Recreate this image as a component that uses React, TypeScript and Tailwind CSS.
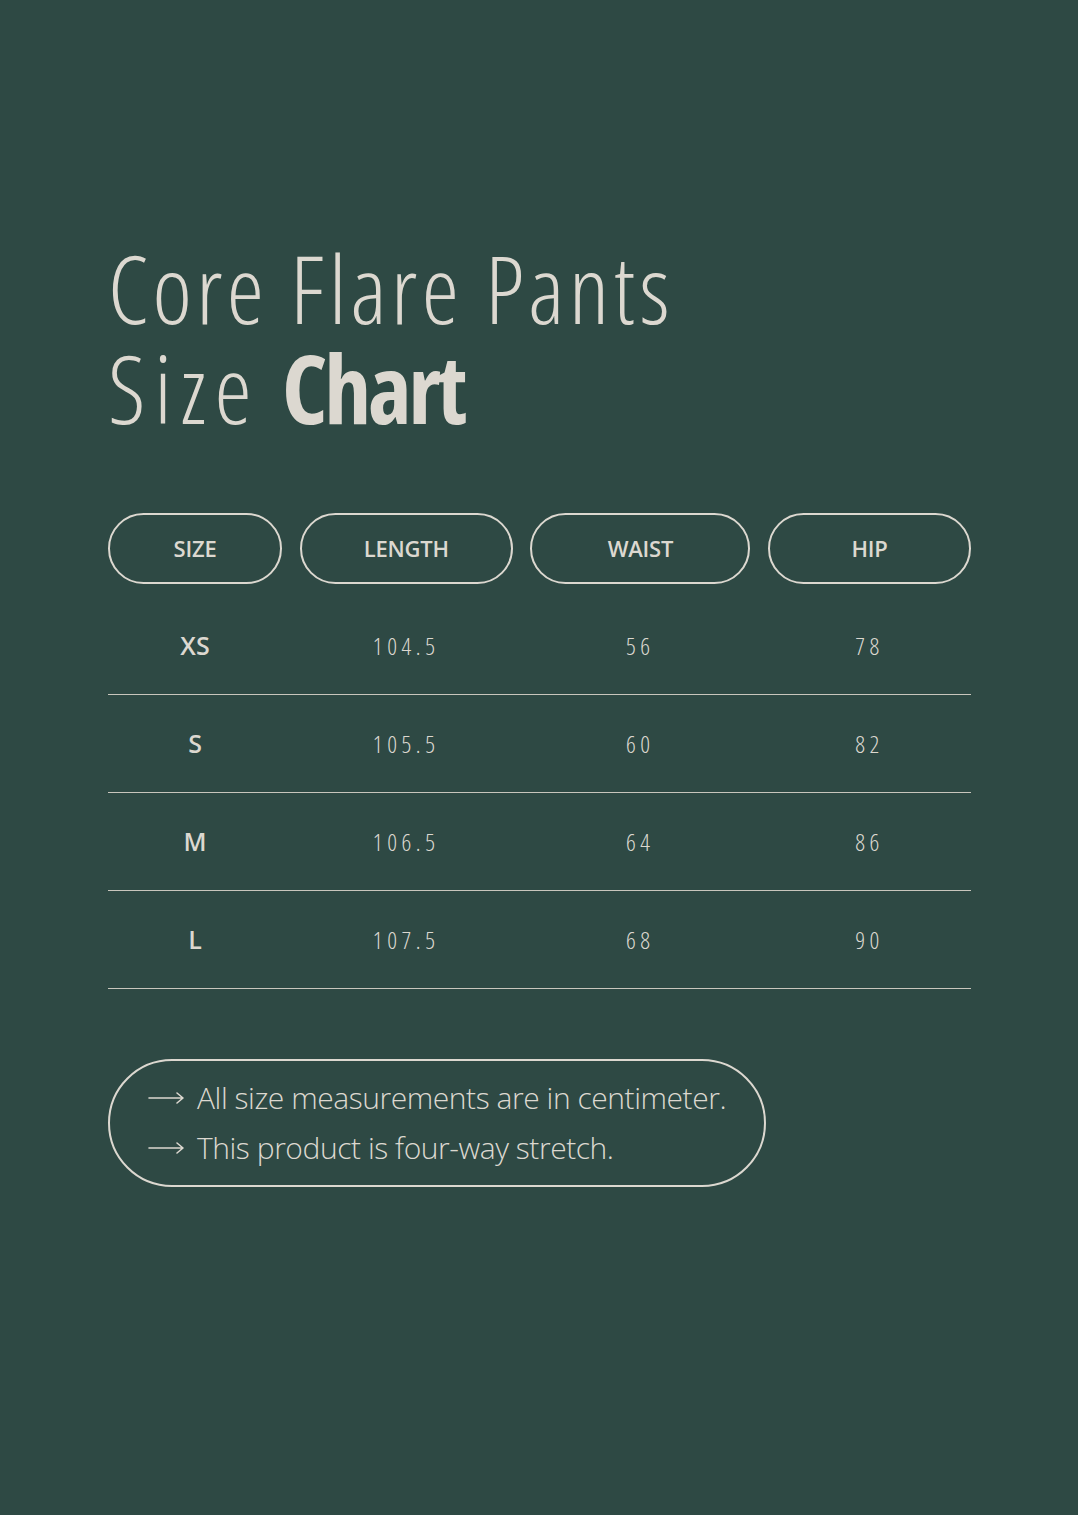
const rows = [
  { size: "XS", length: "104.5", waist: "56", hip: "78" },
  { size: "S", length: "105.5", waist: "60", hip: "82" },
  { size: "M", length: "106.5", waist: "64", hip: "86" },
  { size: "L", length: "107.5", waist: "68", hip: "90" },
];

const headers = ["SIZE", "LENGTH", "WAIST", "HIP"];

const cols = "grid grid-cols-[174px_213px_220px_203px] gap-x-[17.7px]";

const Arrow = () => (
  <svg width="37" height="14" viewBox="0 0 37 14" className="shrink-0" fill="none">
    <path d="M1 7H35M29 2L35 7L29 12" stroke="#dcd8d0" strokeWidth="1.6" strokeLinecap="round" strokeLinejoin="round" />
  </svg>
);

export default function App() {
  return (
    <div
      className="min-h-[1515px] w-full bg-[#2e4944] pl-[108px] pt-[238px] text-[#dcd8d0]"
      style={{ fontFamily: '"Open Sans", "Noto Sans", sans-serif' }}
    >
      <h1 className="text-[94px] font-light leading-[100px] tracking-[0.047em] [font-stretch:75%]">
        <span className="block">Core Flare Pants</span>
        <span className="block">
          <span className="tracking-[0.09em]">Size</span>{" "}
          <span className="font-bold tracking-[-0.035em]">Chart</span>
        </span>
      </h1>

      <div className="mt-[75px] w-[863px]">
        <div className={cols}>
          {headers.map((h) => (
            <div
              key={h}
              className="flex h-[71px] items-center justify-center rounded-full border-2 border-[#dcd8d0] text-[22px] font-semibold tracking-[-0.01em] [font-stretch:88%]"
            >
              {h}
            </div>
          ))}
        </div>

        <div className="mt-[13px]">
          {rows.map((r) => (
            <div key={r.size} className={`${cols} h-[98px] items-center border-b border-[#c9c6bd]`}>
              <div className="text-center text-[25px] font-semibold [font-stretch:100%]">{r.size}</div>
              <div className="text-center text-[24px] font-light tracking-[0.19em] [font-stretch:75%]">{r.length}</div>
              <div className="text-center text-[24px] font-light tracking-[0.19em] [font-stretch:75%]">{r.waist}</div>
              <div className="text-center text-[24px] font-light tracking-[0.19em] [font-stretch:75%]">{r.hip}</div>
            </div>
          ))}
        </div>
      </div>

      <div className="mt-[70px] flex h-[128px] w-[658px] flex-col justify-center gap-[12px] rounded-full border-2 border-[#dcd8d0] pl-[38px] text-[30px] font-light tracking-[-0.015em] [font-stretch:88%]">
        <div className="flex items-center gap-[12px] leading-[38px]">
          <Arrow />
          <span>All size measurements are in centimeter.</span>
        </div>
        <div className="flex items-center gap-[12px] leading-[38px]">
          <Arrow />
          <span>This product is four-way stretch.</span>
        </div>
      </div>
    </div>
  );
}
